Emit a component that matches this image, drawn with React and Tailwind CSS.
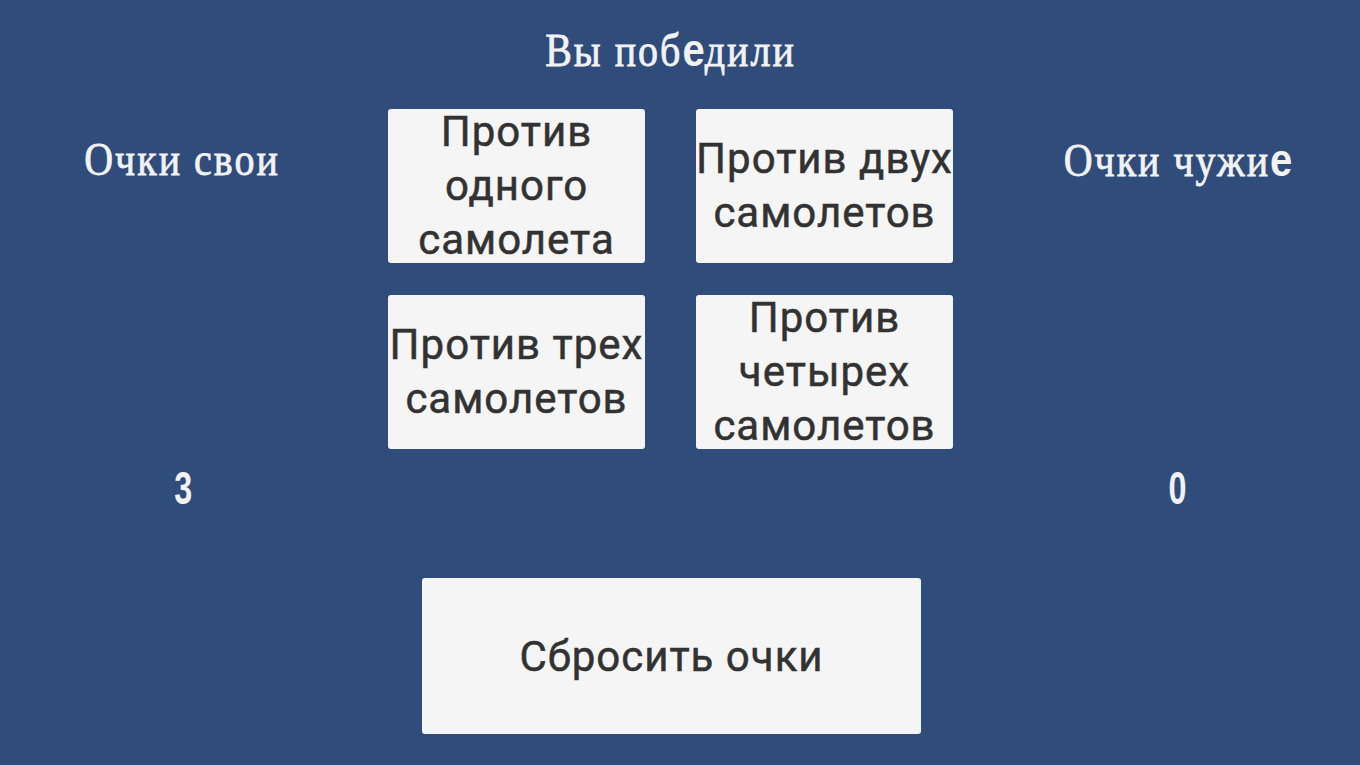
import React, { useState } from 'react';

const headerCls =
  "font-['Liberation_Serif','DejaVu_Serif',serif] h-[48px] leading-[48px] text-[40px] text-[#f2f2f2] tracking-[2px] scale-y-[1.17] [-webkit-text-stroke:0.7px_#f2f2f2]";

const Fallback = ({ children }) => (
  <span className="font-['Liberation_Sans',Arial,sans-serif] font-bold tracking-normal [-webkit-text-stroke:0px]">{children}</span>
);

const ModeButton = ({ lines, onClick }) => (
  <button
    onClick={onClick}
    className="w-[257px] h-[154px] bg-[#f5f5f5] rounded-[3px] text-[#323232] font-['Roboto',Arial,sans-serif] text-[42px] leading-[54px] tracking-[1px] [-webkit-text-stroke:0.5px_#323232] flex flex-col items-center justify-center text-center"
  >
    {lines.map((l, j) => (
      <span key={j} className="block whitespace-nowrap">{l}</span>
    ))}
  </button>
);

const App = () => {
  const [mine, setMine] = useState(3);
  const [theirs, setTheirs] = useState(0);

  const modes = [
    ['Против', 'одного', 'самолета'],
    ['Против двух', 'самолетов'],
    ['Против трех', 'самолетов'],
    ['Против', 'четырех', 'самолетов'],
  ];

  return (
    <div className="w-[1360px] h-[765px] bg-[#304c7a] overflow-hidden flex flex-col">
      <div className={headerCls + ' mt-[26px] text-center pr-[19px]'}>
        Вы поб<Fallback>е</Fallback>дили
      </div>

      <div className="mt-[35px] flex">
        <div className="w-[364px] flex flex-col items-center">
          <div className={headerCls + ' mt-[27px]'}>Очки свои</div>
          <div className="mt-[280px] h-[48px] leading-[48px] text-[38px] font-bold text-[#f2f2f2] pl-[4px] font-['Liberation_Sans',Arial,sans-serif] scale-y-[1.2] scale-x-[0.85]">
            {mine}
          </div>
        </div>

        <div className="ml-[24px] grid grid-cols-[257px_257px] gap-x-[51px] gap-y-[32px] self-start">
          {modes.map((lines, i) => (
            <ModeButton key={i} lines={lines} onClick={() => setMine(mine + 1)} />
          ))}
        </div>

        <div className="ml-[43px] w-[364px] flex flex-col items-center">
          <div className={headerCls + ' mt-[27px]'}>
            Очки чужи<Fallback>е</Fallback>
          </div>
          <div className="mt-[280px] h-[48px] leading-[48px] text-[38px] font-bold text-[#f2f2f2] font-['Liberation_Sans',Arial,sans-serif] scale-y-[1.2] scale-x-[0.85]">
            {theirs}
          </div>
        </div>
      </div>

      <div className="mt-[66px] pl-[422px]">
        <button
          onClick={() => { setMine(0); setTheirs(0); }}
          className="w-[499px] h-[156px] bg-[#f5f5f5] rounded-[3px] text-[#323232] font-['Roboto',Arial,sans-serif] text-[42px] tracking-[1px] [-webkit-text-stroke:0.5px_#323232]"
        >
          Сбросить очки
        </button>
      </div>
    </div>
  );
};

export default App;
